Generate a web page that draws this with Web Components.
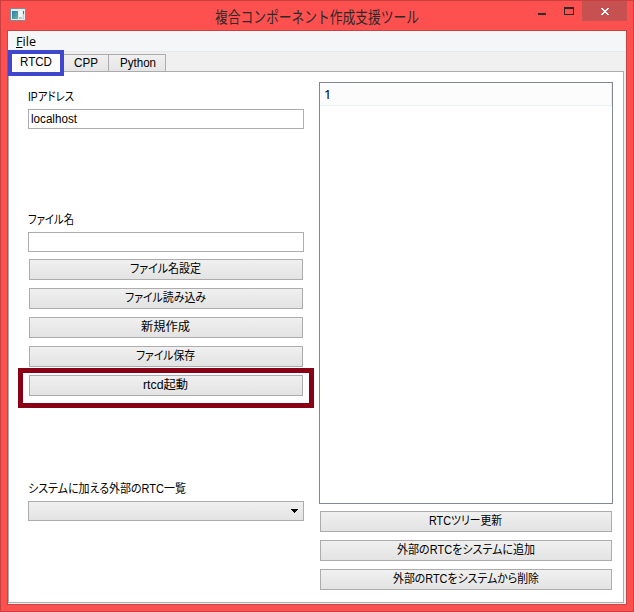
<!DOCTYPE html>
<html lang="ja">
<head>
<meta charset="utf-8">
<title>複合コンポーネント作成支援ツール</title>
<style>
html,body{margin:0;width:634px;height:612px;overflow:hidden}
body{font:12px/16px "Liberation Sans","Noto Sans CJK JP",sans-serif;color:#000}
</style>
</head>
<body>
<app-window>
  <title-bar slot="title"><fit-text w="204" style="font:16px/22px 'Noto Sans CJK JP',sans-serif">複合コンポーネント作成支援ツール</fit-text></title-bar>
  <menu-bar slot="menu"><fit-text w="20" style="font:13px/18px 'Open Sans','Noto Sans',sans-serif"><u>F</u>ile</fit-text></menu-bar>
  <tab-bar slot="tabs">
    <tab-item active style="width:56px"><fit-text w="32">RTCD</fit-text></tab-item>
    <tab-item style="width:45px"><fit-text w="24">CPP</fit-text></tab-item>
    <tab-item style="width:57px;padding-left:2px"><fit-text w="36">Python</fit-text></tab-item>
  </tab-bar>
  <side-form slot="left">
    <field-label style="margin-top:17px"><fit-text w="46">IPアドレス</fit-text></field-label>
    <text-field style="margin-top:4px"><fit-text w="46">localhost</fit-text></text-field>
    <field-label style="margin-top:83px"><fit-text w="46">ファイル名</fit-text></field-label>
    <text-field style="margin-top:4px"></text-field>
    <button-stack style="margin:7px 1px 0">
      <push-button><fit-text w="71">ファイル名設定</fit-text></push-button>
      <push-button><fit-text w="81">ファイル読み込み</fit-text></push-button>
      <push-button><fit-text w="49">新規作成</fit-text></push-button>
      <push-button><fit-text w="59">ファイル保存</fit-text></push-button>
      <push-button marked><fit-text w="45">rtcd起動</fit-text></push-button>
    </button-stack>
    <field-label style="margin-top:85px"><fit-text w="158">システムに加える外部のRTC一覧</fit-text></field-label>
    <combo-box style="margin-top:4px"></combo-box>
  </side-form>
  <side-form slot="right">
    <tree-view style="margin-top:10px">1</tree-view>
    <button-stack style="margin:7px 1px 0">
      <push-button><fit-text w="73">RTCツリー更新</fit-text></push-button>
      <push-button><fit-text w="138">外部のRTCをシステムに追加</fit-text></push-button>
      <push-button><fit-text w="146">外部のRTCをシステムから削除</fit-text></push-button>
    </button-stack>
  </side-form>
</app-window>
<script>
const define = (name, html, setup) => {
  const t = document.createElement('template');
  t.innerHTML = '<style>:host{box-sizing:border-box}*{box-sizing:border-box}</style>' + html;
  customElements.define(name, class extends HTMLElement {
    constructor() {
      super();
      this.attachShadow({mode: 'open'}).append(t.content.cloneNode(true));
    }
    connectedCallback() { if (setup) setup(this); }
  });
};

define('app-window', `<style>
:host{display:flex;flex-direction:column;width:634px;height:612px;background:#ff5050;border:1px solid #c84040;padding:0 6px 6px}
.client{flex:1;display:flex;flex-direction:column;border:1px solid #c84444;background:#f0f0f0}
.pane{flex:1;display:flex;margin:0 2px 1px 0;padding:0 10px 0 19px;gap:15px;background:#fff;border:1px solid #a9abad}
slot[name=left]::slotted(*){width:276px}
slot[name=right]::slotted(*){width:294px}
</style><slot name="title"></slot><div class="client"><slot name="menu"></slot><slot name="tabs"></slot><div class="pane"><slot name="left"></slot><slot name="right"></slot></div></div>`);

define('title-bar', `<style>
:host{display:grid;grid-template-columns:1fr auto 1fr;height:29px;color:#2a2a2a}
.app{margin:7px 0 0 3px;display:block}
.text{padding-top:4px}
.controls{justify-self:end;display:flex;align-items:flex-start}
svg{display:block}
</style>
<svg class="app" width="17" height="14" shape-rendering="crispEdges"><defs><linearGradient id="g" x2="1" y2="1"><stop stop-color="#287fac"/><stop offset="1" stop-color="#65b99a"/></linearGradient></defs><path d="M0 0h16v13H0z" fill="#858a8e"/><path d="M1 1h14v11H1z" fill="#e3ebef"/><path d="M2 3h6v8H2z" fill="url(#g)"/><path d="M9 3h3v6H9z" fill="#f2f6f8"/><path d="M9 9h3v2H9z" fill="#bdc9cd"/><path d="M13 3h1v3h-1z" fill="#3f73b9"/><path d="M13 6h1v5h-1z" fill="#bccbd1"/></svg>
<div class="text"><slot></slot></div>
<div class="controls"><svg width="89" height="21" shape-rendering="crispEdges"><path d="M0 12h8v2H0zM26 6h10v8H26zM27 8v5h8V8z" fill="#2a2a2a" fill-rule="evenodd"/><path d="M44 0h45v20H44z" fill="#c75050"/><path d="M63 7h2v1h1v1h2V8h1V7h2v1h-1v1h-1v1h-1v1h1v1h1v1h1v1h-2v-1h-1v-1h-2v1h-1v1h-2v-1h1v-1h1v-1h1v-1h-1V9h-1V8h-1z" fill="#fff"/></svg></div>`);
define('menu-bar', `<style>:host{display:flex;height:21px;padding:1px 0 0 8px;background:#f5f6f7;border-bottom:1px solid #e8e9ea}</style><slot></slot>`);
define('tab-bar', `<style>:host{display:flex;align-items:flex-end;height:19px}</style><slot></slot>`);
define('tab-item', `<style>
:host{position:relative;display:flex;justify-content:center;height:17px;background:linear-gradient(#f0f0f0,#e5e5e5);border:1px solid #acacac;border-bottom:0;border-left-width:0}
:host([active]){height:19px;background:#fff;border:0;padding-top:2px}
.mark{display:none}
:host([active]) .mark{display:block;position:absolute;z-index:2;left:0;top:-2px;width:56px;height:26px;border:4px solid #3f48cc}
:host([active]) .fill{position:absolute;left:4px;top:2px;width:48px;height:18px;background:#fff}
.txt{position:relative;z-index:3}
</style><div class="fill"></div><div class="mark"></div><div class="txt"><slot></slot></div>`);
define('side-form', `<style>:host{display:flex;flex-direction:column;flex:none}</style><slot></slot>`);
define('field-label', `<style>:host{display:flex;height:16px}</style><slot></slot>`);
define('text-field', `<style>:host{display:flex;height:20px;padding:1px 2px;background:#fff;border:1px solid #abadb3}</style><slot></slot>`);
define('button-stack', `<style>:host{display:flex;flex-direction:column;gap:8px}</style><slot></slot>`);
define('push-button', `<style>
:host{position:relative;display:flex;justify-content:center;height:21px;padding:1px 1px 0 0;background:linear-gradient(#f0f0f0,#e3e3e3);border:1px solid #acacac}
.mark{display:none}
:host([marked]) .mark{display:block;position:absolute;left:-12px;top:-8px;width:296px;height:40px;border:5px solid #880015}
</style><slot></slot><div class="mark"></div>`);
define('combo-box', `<style>
:host{display:flex;justify-content:flex-end;align-items:center;height:20px;padding-right:5px;background:linear-gradient(#f0f0f0,#e3e3e3);border:1px solid #acacac}
</style><svg width="7" height="4" shape-rendering="crispEdges"><path d="M0 0h7v1H6v1H5v1H4v1H3V3H2V2H1V1H0z"/></svg>`);
define('tree-view', `<style>
:host{display:block;height:422px;border:1px solid #828790;background:#fff}
.row{height:23px;padding:3px 4px;background:#fcfcfc;border-right:1px solid #e8eff7;border-bottom:1px solid #e8eff7;font:13px/17px "Noto Sans",sans-serif}
</style><div class="row"><slot></slot></div>`);

/* Proportional Japanese text condensed to the advance width given in "w". */
define('fit-text', `<style>
:host{display:block;flex:none;white-space:nowrap;font-feature-settings:"palt"}
span{display:inline-block;transform-origin:0 0}
</style><span><slot></slot></span>`, el => {
  const s = el.shadowRoot.querySelector('span'), w = +el.getAttribute('w');
  el.style.width = w + 'px';
  s.style.transform = 'scaleX(' + w / s.getBoundingClientRect().width + ')';
});
</script>
</body>
</html>
